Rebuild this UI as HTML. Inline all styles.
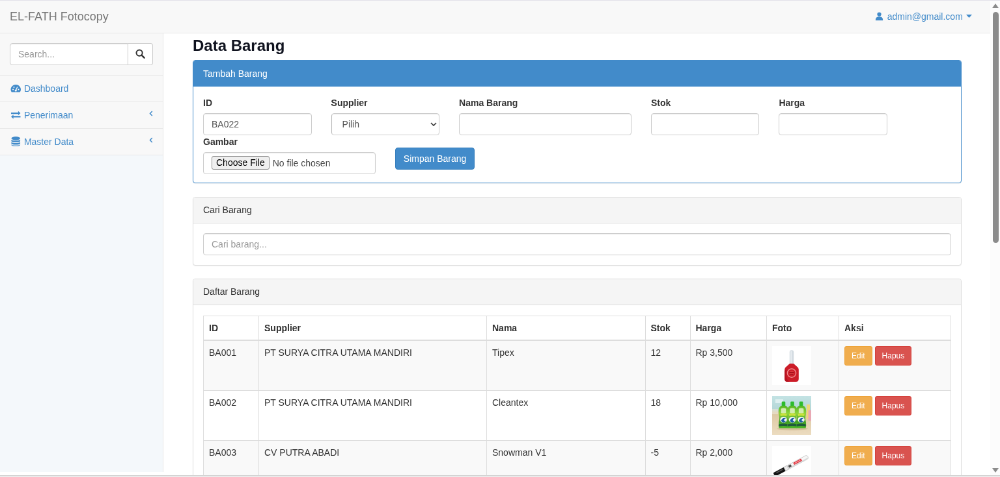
<!DOCTYPE html>
<html lang="id">
<head>
<meta charset="utf-8">
<title>EL-FATH Fotocopy - Data Barang</title>
<style>
*{box-sizing:border-box;}
html{margin:0;padding:0;background:#fff;overflow:hidden;}
body{margin:0;padding:0;width:1000px;height:477px;overflow:hidden;position:relative;background:#fff;}
#zoomer{will-change:transform;transform:translateY(0.3px) scale(0.65104,0.64875);transform-origin:0 0;width:1536px;height:737px;position:absolute;left:0;top:0;overflow:hidden;
  font-family:"Liberation Sans",Arial,Helvetica,sans-serif;font-size:14px;line-height:1.42857143;color:#333;background:#f4f8fb;}
a{color:#428bca;text-decoration:none;}
#wrapper{width:1522.3px;position:relative;}
.navbar{position:relative;height:51px;background:#f8f8f8;border-bottom:1px solid #e7e7e7;border-top:0;z-index:3;}
.navbar-brand{position:absolute;left:0;top:0;padding:15px 15px;font-size:18px;line-height:20px;color:#777;height:50px;}
.top-right{position:absolute;right:16.6px;top:0;}
.top-right a{display:block;padding:15px;min-height:50px;line-height:20px;color:#428bca;white-space:nowrap;}
.sidebar{position:absolute;left:0;top:50.6px;width:250px;z-index:1;}
.sidebar ul{list-style:none;margin:0;padding:0;background:#f8f8f8;}
.sidebar li{border-bottom:1px solid #e7e7e7;position:relative;}
.sidebar li.search{padding:15px;}
.sidebar li a{display:block;padding:10px 15px;line-height:20px;}
.input-group{display:flex;width:100%;}
.form-control{display:block;width:100%;height:34px;padding:6px 12px;font-size:14px;line-height:1.42857143;color:#555;background:#fff;border:1px solid #ccc;border-radius:4px;box-shadow:inset 0 1px 1px rgba(0,0,0,.075);font-family:inherit;}
.ph{color:#999;}
.input-group .form-control{border-radius:4px 0 0 4px;flex:1;}
.input-group .btn-s{width:38px;height:34px;border:1px solid #ccc;border-left:0;border-radius:0 4px 4px 0;background:#fff;display:flex;align-items:center;justify-content:center;}
.arrow{position:absolute;right:15px;top:7px;}
.fw{display:inline-block;width:18px;text-align:center;white-space:nowrap;overflow:visible;}
.fw svg{vertical-align:-2px;}
#page-wrapper{margin-left:250px;padding:0 30px;border-left:1px solid #e7e7e7;background:#fff;min-height:700px;position:relative;}
.container-fluid{padding:0 15px;}
h3{font-size:24px;font-weight:bold;line-height:1.1;margin:0;padding:0;color:#10131f;}
.panel{margin-bottom:20px;background:#fff;border:1px solid #ddd;border-radius:4px;box-shadow:0 1px 1px rgba(0,0,0,.05);}
.panel-heading{padding:9.5px 15px;border-bottom:1px solid #ddd;border-radius:3px 3px 0 0;background:#f5f5f5;color:#333;line-height:20px;}
.panel-body{padding:15px;}
.panel-primary{border-color:#428bca;}
.panel-primary .panel-heading{background:#428bca;border-color:#428bca;color:#fff;}
.row{margin:0 -15px;display:flex;flex-wrap:wrap;}
.col{padding:0 15px;}
.c2{width:16.66666667%;}
.c3{width:25%;}
label{display:block;font-weight:bold;margin:0 0 5.6px;line-height:20px;}
.btn{display:inline-block;padding:6px 12px;font-size:14px;line-height:1.42857143;border:1px solid transparent;border-radius:4px;color:#fff;text-align:center;white-space:nowrap;vertical-align:middle;}
.btn-primary{background:#428bca;border-color:#357ebd;}
.btn-sm{padding:5px 10px;font-size:12px;line-height:1.5;border-radius:3px;}
.btn-warning{background:#f0ad4e;border-color:#eea236;}
.btn-danger{background:#d9534f;border-color:#d43f3a;}
table{border-collapse:collapse;border-spacing:0;width:100%;border:1px solid #ddd;table-layout:fixed;margin-bottom:20px;}
th,td{border:1px solid #ddd;padding:8px;line-height:1.42857143;vertical-align:top;text-align:left;}
th{font-weight:bold;vertical-align:bottom;border-bottom-width:2px;}
tbody tr:nth-child(odd) td{background:#f9f9f9;}
.foto{width:60px;height:60px;display:block;background:#fff;}
.file{display:flex;align-items:center;}
.choose{display:inline-block;border:1px solid #8a8a8a;background:#efefef;border-radius:3px;color:#000;font-size:13.333px;padding:1px 6px;line-height:17px;margin-right:5px;font-size:14px;}
.sel{position:relative;}
/* scrollbar */
#sb{position:absolute;right:0;top:0;width:15px;height:737px;background:#fcfcfc;z-index:10;}
#sb .thumb{position:absolute;left:4px;width:8.5px;top:17.8px;height:356px;background:#8b8b8b;border-radius:4.5px;}
#sb .up,#sb .down{position:absolute;left:3px;width:0;height:0;border-left:5.3px solid transparent;border-right:5.3px solid transparent;}
#sb .up{top:4.8px;border-bottom:7.5px solid #8b8b8b;}
#sb .down{top:720.5px;border-top:7.5px solid #8b8b8b;}
#topline{position:absolute;left:0;top:0;width:1000px;height:1px;background:#e8e7ed;z-index:20;}
#botline{position:absolute;left:0;top:475px;width:1000px;height:2px;background:linear-gradient(#d4d4d4 0,#d4d4d4 1px,#ebebeb 1px,#ebebeb 2px);z-index:20;}
#sidewhite{position:absolute;left:0;top:472.2px;width:164.5px;height:3px;background:#fff;z-index:19;}
</style>
</head>
<body>
<div id="zoomer">
<div id="wrapper">
  <div class="navbar">
    <a class="navbar-brand">EL-FATH Fotocopy</a>
    <div class="top-right"><a><svg width="13" height="13" viewBox="0 0 12 12" style="vertical-align:-0.5px;margin-right:1.7px;margin-left:-1.7px"><circle cx="6" cy="3.3" r="2.9" fill="#428bca"/><path d="M0.8 12 C0.8 8 2.5 6.6 6 6.6 S11.2 8 11.2 12 Z" fill="#428bca"/></svg> admin@gmail.com <svg width="9" height="6" viewBox="0 0 9 6" style="vertical-align:2px;margin-left:1px;margin-right:-2px"><path d="M0 0 L9 0 L4.5 5 Z" fill="#428bca"/></svg></a></div>
  </div>
  <div class="sidebar">
    <ul>
      <li class="search"><div class="input-group"><div class="form-control ph">Search...</div><div class="btn-s"><svg width="15" height="15" viewBox="0 0 14 14"><circle cx="5.7" cy="5.7" r="4.3" fill="none" stroke="#333" stroke-width="1.9"/><path d="M8.9 8.9 L12.7 12.7" stroke="#333" stroke-width="2.3" stroke-linecap="round"/></svg></div></div></li>
      <li><a><span class="fw"><svg width="16.5" height="14" viewBox="0 0 16 14" style="margin-left:0.5px"><path d="M8 1 A7.5 7.5 0 0 0 1.5 12.5 L14.5 12.5 A7.5 7.5 0 0 0 8 1 Z" fill="#428bca"/><circle cx="8" cy="10" r="1.6" fill="#f8f8f8"/><path d="M8 10 L10.5 4.5" stroke="#f8f8f8" stroke-width="1.3"/><circle cx="3.8" cy="8.5" r="1" fill="#f8f8f8"/><circle cx="5.2" cy="5" r="1" fill="#f8f8f8"/><circle cx="12.2" cy="8.5" r="1" fill="#f8f8f8"/></svg></span> Dashboard</a></li>
      <li><a><span class="fw"><svg width="16.5" height="13.5" viewBox="0 0 16 14" style="vertical-align:-1.5px;margin-left:0.5px"><path d="M0.5 3 H11.8 V0.8 L15.5 4.2 L11.8 7.6 V5.4 H0.5 Z M15.5 8.6 H4.2 V6.4 L0.5 9.8 L4.2 13.2 V11 H15.5 Z" fill="#428bca"/></svg></span> Penerimaan<span class="arrow"><svg width="6" height="9" viewBox="0 0 6 9"><path d="M4.8 1 L1.5 4.5 L4.8 8" fill="none" stroke="#428bca" stroke-width="1.5"/></svg></span></a></li>
      <li><a><span class="fw"><svg width="14.5" height="15.5" viewBox="0 0 14 15" style="vertical-align:-2.5px;margin-left:1px"><ellipse cx="7" cy="2.7" rx="6.6" ry="2.6" fill="#428bca"/><path d="M0.4 4.6 C2 6.6 12 6.6 13.6 4.6 V7.0 C12 9.0 2 9.0 0.4 7.0 Z M0.4 8.2 C2 10.2 12 10.2 13.6 8.2 V10.6 C12 12.6 2 12.6 0.4 10.6 Z M0.4 11.8 C2 13.8 12 13.8 13.6 11.8 V12.6 C12 15.6 2 15.6 0.4 12.6 Z" fill="#428bca"/></svg></span> Master Data<span class="arrow"><svg width="6" height="9" viewBox="0 0 6 9"><path d="M4.8 1 L1.5 4.5 L4.8 8" fill="none" stroke="#428bca" stroke-width="1.5"/></svg></span></a></li>
    </ul>
  </div>
  <div id="page-wrapper">
    <div class="container-fluid">
      <h3 style="padding-top:5.7px;margin-bottom:9.3px;">Data Barang</h3>
      <div class="panel panel-primary" style="margin-bottom:20.6px">
        <div class="panel-heading">Tambah Barang</div>
        <div class="panel-body" style="padding-bottom:13.8px">
          <div class="row">
            <div class="col c2"><label>ID</label><div class="form-control">BA022</div></div>
            <div class="col c2"><label>Supplier</label><div class="form-control sel" style="padding-left:16px">Pilih<svg width="10" height="6" viewBox="0 0 10 6" style="position:absolute;right:3.5px;top:13.5px"><path d="M1 1 L5 5 L9 1" fill="none" stroke="#3a3a3a" stroke-width="1.7"/></svg></div></div>
            <div class="col c3"><label>Nama Barang</label><div class="form-control"></div></div>
            <div class="col c2"><label>Stok</label><div class="form-control"></div></div>
            <div class="col c2"><label>Harga</label><div class="form-control"></div></div>
            <div class="col c3"><label>Gambar</label><div class="form-control file" style="color:#4a4a4a"><span class="choose">Choose File</span>No file chosen</div></div>
            <div class="col c2"><span class="btn btn-primary" style="margin-top:19.5px">Simpan Barang</span></div>
          </div>
        </div>
      </div>
      <div class="panel">
        <div class="panel-heading">Cari Barang</div>
        <div class="panel-body"><div class="form-control ph">Cari barang...</div></div>
      </div>
      <div class="panel">
        <div class="panel-heading">Daftar Barang</div>
        <div class="panel-body" style="padding-top:16.4px">
          <table>
            <colgroup><col style="width:85px"><col style="width:350px"><col style="width:243.5px"><col style="width:69px"><col style="width:117.5px"><col style="width:111px"><col></colgroup>
            <thead><tr><th>ID</th><th>Supplier</th><th>Nama</th><th>Stok</th><th>Harga</th><th>Foto</th><th>Aksi</th></tr></thead>
            <tbody>
              <tr><td>BA001</td><td>PT SURYA CITRA UTAMA MANDIRI</td><td>Tipex</td><td>12</td><td>Rp 3,500</td><td><svg class="foto" viewBox="0 0 60 60"><rect width="60" height="60" fill="#fff"/><rect x="26.8" y="6.3" width="6.4" height="23" rx="3" fill="#d3dbe1"/><rect x="28.2" y="7.5" width="2" height="19" rx="1" fill="#e9eef2"/><path d="M19.2 36 Q19.2 33 22 31.5 L27 27 H33 L38 31.5 Q40.8 33 40.8 36 V50.5 Q40.8 55 36.5 55 H23.5 Q19.2 55 19.2 50.5 Z" fill="#cc1c28"/><path d="M19.2 38 V50.5 Q19.2 55 23.5 55 H27 Q22 52.5 22 46.5 V36 Z" fill="#b5121f"/><circle cx="30" cy="41.6" r="6.6" fill="none" stroke="#ee8d8f" stroke-width="1.5"/><circle cx="30" cy="41.6" r="3.6" fill="#dc373e"/><rect x="26.3" y="40" width="7.4" height="1.6" fill="#a30d19"/><rect x="27.5" y="43" width="5" height="1.2" fill="#a30d19"/></svg></td><td><span class="btn btn-sm btn-warning">Edit</span> <span class="btn btn-sm btn-danger">Hapus</span></td></tr>
              <tr><td>BA002</td><td>PT SURYA CITRA UTAMA MANDIRI</td><td>Cleantex</td><td>18</td><td>Rp 10,000</td><td><svg class="foto" viewBox="0 0 60 60"><defs><linearGradient id="bg1" x1="0" y1="0" x2="0" y2="1"><stop offset="0" stop-color="#c3e3e4"/><stop offset=".36" stop-color="#b4d6d6"/><stop offset=".42" stop-color="#dcc7a2"/><stop offset="1" stop-color="#ecdcc0"/></linearGradient><linearGradient id="bt" x1="0" y1="0" x2="0" y2="1"><stop offset="0" stop-color="#55b524"/><stop offset=".35" stop-color="#8fd43a"/><stop offset=".7" stop-color="#3f9e22"/><stop offset="1" stop-color="#4db52a"/></linearGradient></defs><rect width="60" height="60" fill="url(#bg1)"/><rect x="0" y="20" width="9" height="8" fill="#e8e2d2" opacity=".7"/><rect x="5" y="5" width="12" height="6" fill="#e6f2f2" opacity=".8"/><rect x="53" y="13" width="5" height="22" fill="#f0d878"/><rect x="55.5" y="22" width="4.5" height="16" fill="#e9a9b4"/><ellipse cx="31" cy="50.5" rx="24" ry="2.2" fill="#cdb78f" opacity=".7"/><g transform="translate(17.5 0)"><rect x="-2.8" y="8.5" width="5.6" height="7" rx="1.2" fill="#2dbb2c"/><path d="M-3.4 15 H3.4 Q7.6 17 7.6 23 Q7.6 28 6.6 32 Q6 36 7.4 41 Q8 46 7 49.5 H-7 Q-8 46 -7.4 41 Q-6 36 -6.6 32 Q-7.6 28 -7.6 23 Q-7.6 17 -3.4 15 Z" fill="url(#bt)"/><path d="M-3.8 19.5 Q0 17.6 3.8 19.5 V26 Q0 27.5 -3.8 26 Z" fill="#d3ecb0"/><path d="M-5 27.5 Q0 25.5 5 27.5 L4.6 31 Q0 29.6 -4.6 31 Z" fill="#c9e23c"/><ellipse cx="0" cy="36.5" rx="5.2" ry="4.6" fill="#f4f8f4"/><path d="M-3.6 37.8 Q-1.5 32.6 3.6 34.2 Q1 35 0.6 37.2 Q2.6 39.6 4.2 38.2 Q2 41.6 -1.2 40.6 Q-3.4 39.8 -3.6 37.8 Z" fill="#1d5ea6"/><path d="M-7.2 43.5 Q0 41.5 7.2 43.5 L7 46.8 Q0 45 -7 46.8 Z" fill="#1f5b3a"/></g><g transform="translate(31 0)"><rect x="-2.8" y="8.5" width="5.6" height="7" rx="1.2" fill="#2dbb2c"/><path d="M-3.4 15 H3.4 Q7.6 17 7.6 23 Q7.6 28 6.6 32 Q6 36 7.4 41 Q8 46 7 49.5 H-7 Q-8 46 -7.4 41 Q-6 36 -6.6 32 Q-7.6 28 -7.6 23 Q-7.6 17 -3.4 15 Z" fill="url(#bt)"/><path d="M-3.8 19.5 Q0 17.6 3.8 19.5 V26 Q0 27.5 -3.8 26 Z" fill="#d3ecb0"/><path d="M-5 27.5 Q0 25.5 5 27.5 L4.6 31 Q0 29.6 -4.6 31 Z" fill="#c9e23c"/><ellipse cx="0" cy="36.5" rx="5.2" ry="4.6" fill="#f4f8f4"/><path d="M-3.6 37.8 Q-1.5 32.6 3.6 34.2 Q1 35 0.6 37.2 Q2.6 39.6 4.2 38.2 Q2 41.6 -1.2 40.6 Q-3.4 39.8 -3.6 37.8 Z" fill="#1d5ea6"/><path d="M-7.2 43.5 Q0 41.5 7.2 43.5 L7 46.8 Q0 45 -7 46.8 Z" fill="#1f5b3a"/></g><g transform="translate(44.6 0)"><rect x="-2.8" y="8.5" width="5.6" height="7" rx="1.2" fill="#2dbb2c"/><path d="M-3.4 15 H3.4 Q7.6 17 7.6 23 Q7.6 28 6.6 32 Q6 36 7.4 41 Q8 46 7 49.5 H-7 Q-8 46 -7.4 41 Q-6 36 -6.6 32 Q-7.6 28 -7.6 23 Q-7.6 17 -3.4 15 Z" fill="url(#bt)"/><path d="M-3.8 19.5 Q0 17.6 3.8 19.5 V26 Q0 27.5 -3.8 26 Z" fill="#d3ecb0"/><path d="M-5 27.5 Q0 25.5 5 27.5 L4.6 31 Q0 29.6 -4.6 31 Z" fill="#c9e23c"/><ellipse cx="0" cy="36.5" rx="5.2" ry="4.6" fill="#f4f8f4"/><path d="M-3.6 37.8 Q-1.5 32.6 3.6 34.2 Q1 35 0.6 37.2 Q2.6 39.6 4.2 38.2 Q2 41.6 -1.2 40.6 Q-3.4 39.8 -3.6 37.8 Z" fill="#1d5ea6"/><path d="M-7.2 43.5 Q0 41.5 7.2 43.5 L7 46.8 Q0 45 -7 46.8 Z" fill="#1f5b3a"/></g></svg></td><td><span class="btn btn-sm btn-warning">Edit</span> <span class="btn btn-sm btn-danger">Hapus</span></td></tr>
              <tr><td>BA003</td><td>CV PUTRA ABADI</td><td>Snowman V1</td><td>-5</td><td>Rp 2,000</td><td><svg class="foto" viewBox="0 0 60 60"><rect width="60" height="60" fill="#fff"/><g transform="translate(2.6 44.6) rotate(-28.3)"><path d="M0.5 -1.9 Q0.5 -3.2 2 -3.2 H19 V3.2 H2 Q0.5 3.2 0.5 1.9 Z" fill="#151515"/><rect x="5" y="-1.6" width="11" height="1.2" fill="#5f5f5f"/><rect x="19" y="-3.2" width="5.5" height="6.4" fill="#ececec" stroke="#9a9a9a" stroke-width=".5"/><path d="M24.5 -3.1 H57 Q59.4 -3.1 59.4 0 Q59.4 3.1 57 3.1 H24.5 Z" fill="#f7f7f7" stroke="#b5b5b5" stroke-width=".6"/><rect x="24.5" y="1.2" width="33.5" height="1.6" fill="#d6d6d6"/><rect x="26" y="-2.1" width="4.5" height="3.4" fill="#4a4a4a"/><rect x="35" y="-2.3" width="13.5" height="3.5" fill="#e02a35"/><rect x="36.5" y="-1.1" width="10.5" height="1" fill="#f7b2b6"/></g></svg></td><td><span class="btn btn-sm btn-warning">Edit</span> <span class="btn btn-sm btn-danger">Hapus</span></td></tr>
            </tbody>
          </table>
        </div>
      </div>
    </div>
  </div>
</div>
<div id="sb"><div class="up"></div><div class="thumb"></div><div class="down"></div></div>
</div>
<div id="topline"></div>
<div id="botline"></div>
<div id="sidewhite"></div>
</body>
</html>
